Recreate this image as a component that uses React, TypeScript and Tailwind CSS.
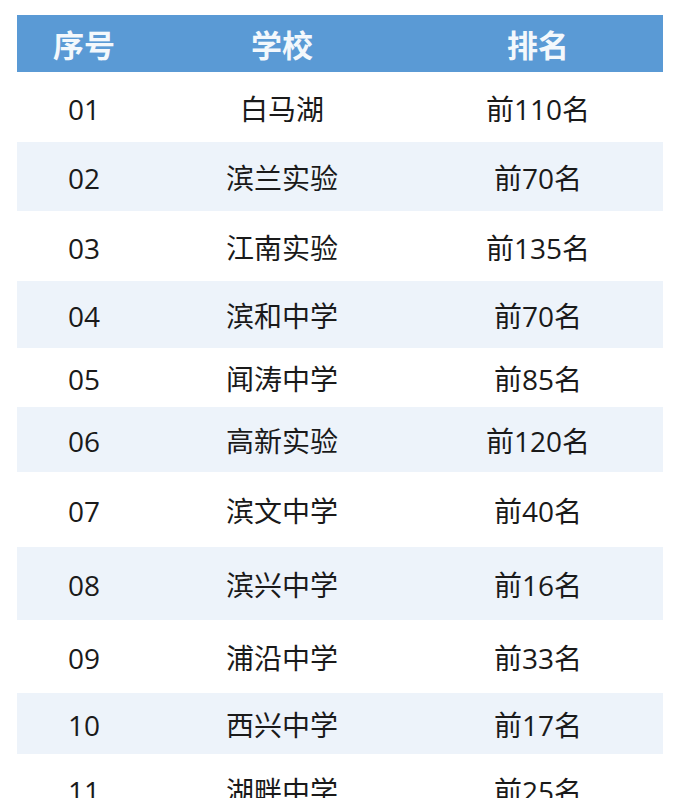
import React from 'react';

const rows = [
    { no: '01', school: '白马湖', rank: '前110名', h: 'h-[70px]' },
    { no: '02', school: '滨兰实验', rank: '前70名', h: 'h-[69px]' },
    { no: '03', school: '江南实验', rank: '前135名', h: 'h-[70px]' },
    { no: '04', school: '滨和中学', rank: '前70名', h: 'h-[67px]' },
    { no: '05', school: '闻涛中学', rank: '前85名', h: 'h-[59px]' },
    { no: '06', school: '高新实验', rank: '前120名', h: 'h-[65px]' },
    { no: '07', school: '滨文中学', rank: '前40名', h: 'h-[75px]' },
    { no: '08', school: '滨兴中学', rank: '前16名', h: 'h-[73px]' },
    { no: '09', school: '浦沿中学', rank: '前33名', h: 'h-[73px]' },
    { no: '10', school: '西兴中学', rank: '前17名', h: 'h-[61px]' },
    { no: '11', school: '湖畔中学', rank: '前25名', h: 'h-[70px]' },
];

const App: React.FC = () => {
    return (
        <div className="w-[678px] h-[798px] overflow-hidden bg-white pt-[15px] pl-[17px] font-['Open_Sans','Noto_Sans_CJK_SC',sans-serif]">
            <div className="w-[646px]">
                {/* Header */}
                <div className="grid grid-cols-[134px_262px_250px] h-[57px] bg-[#5a9ad5] items-center text-[31px] leading-none font-bold text-[#f3f8fc] font-['Noto_Sans_CJK_SC',sans-serif]">
                    <div className="text-center">序号</div>
                    <div className="text-center">学校</div>
                    <div className="text-center">排名</div>
                </div>

                {/* Body */}
                {rows.map((r, i) => (
                    <div
                        key={r.no}
                        className={`grid grid-cols-[134px_262px_250px] items-center pt-[3px] text-[28px] leading-none text-[#1a1a1a] ${r.h} ${i % 2 === 1 ? 'bg-[#edf3fa]' : 'bg-white'}`}
                    >
                        <div className="text-center">{r.no}</div>
                        <div className="text-center">{r.school}</div>
                        <div className="text-center">{r.rank}</div>
                    </div>
                ))}
            </div>
        </div>
    );
};

export default App;
